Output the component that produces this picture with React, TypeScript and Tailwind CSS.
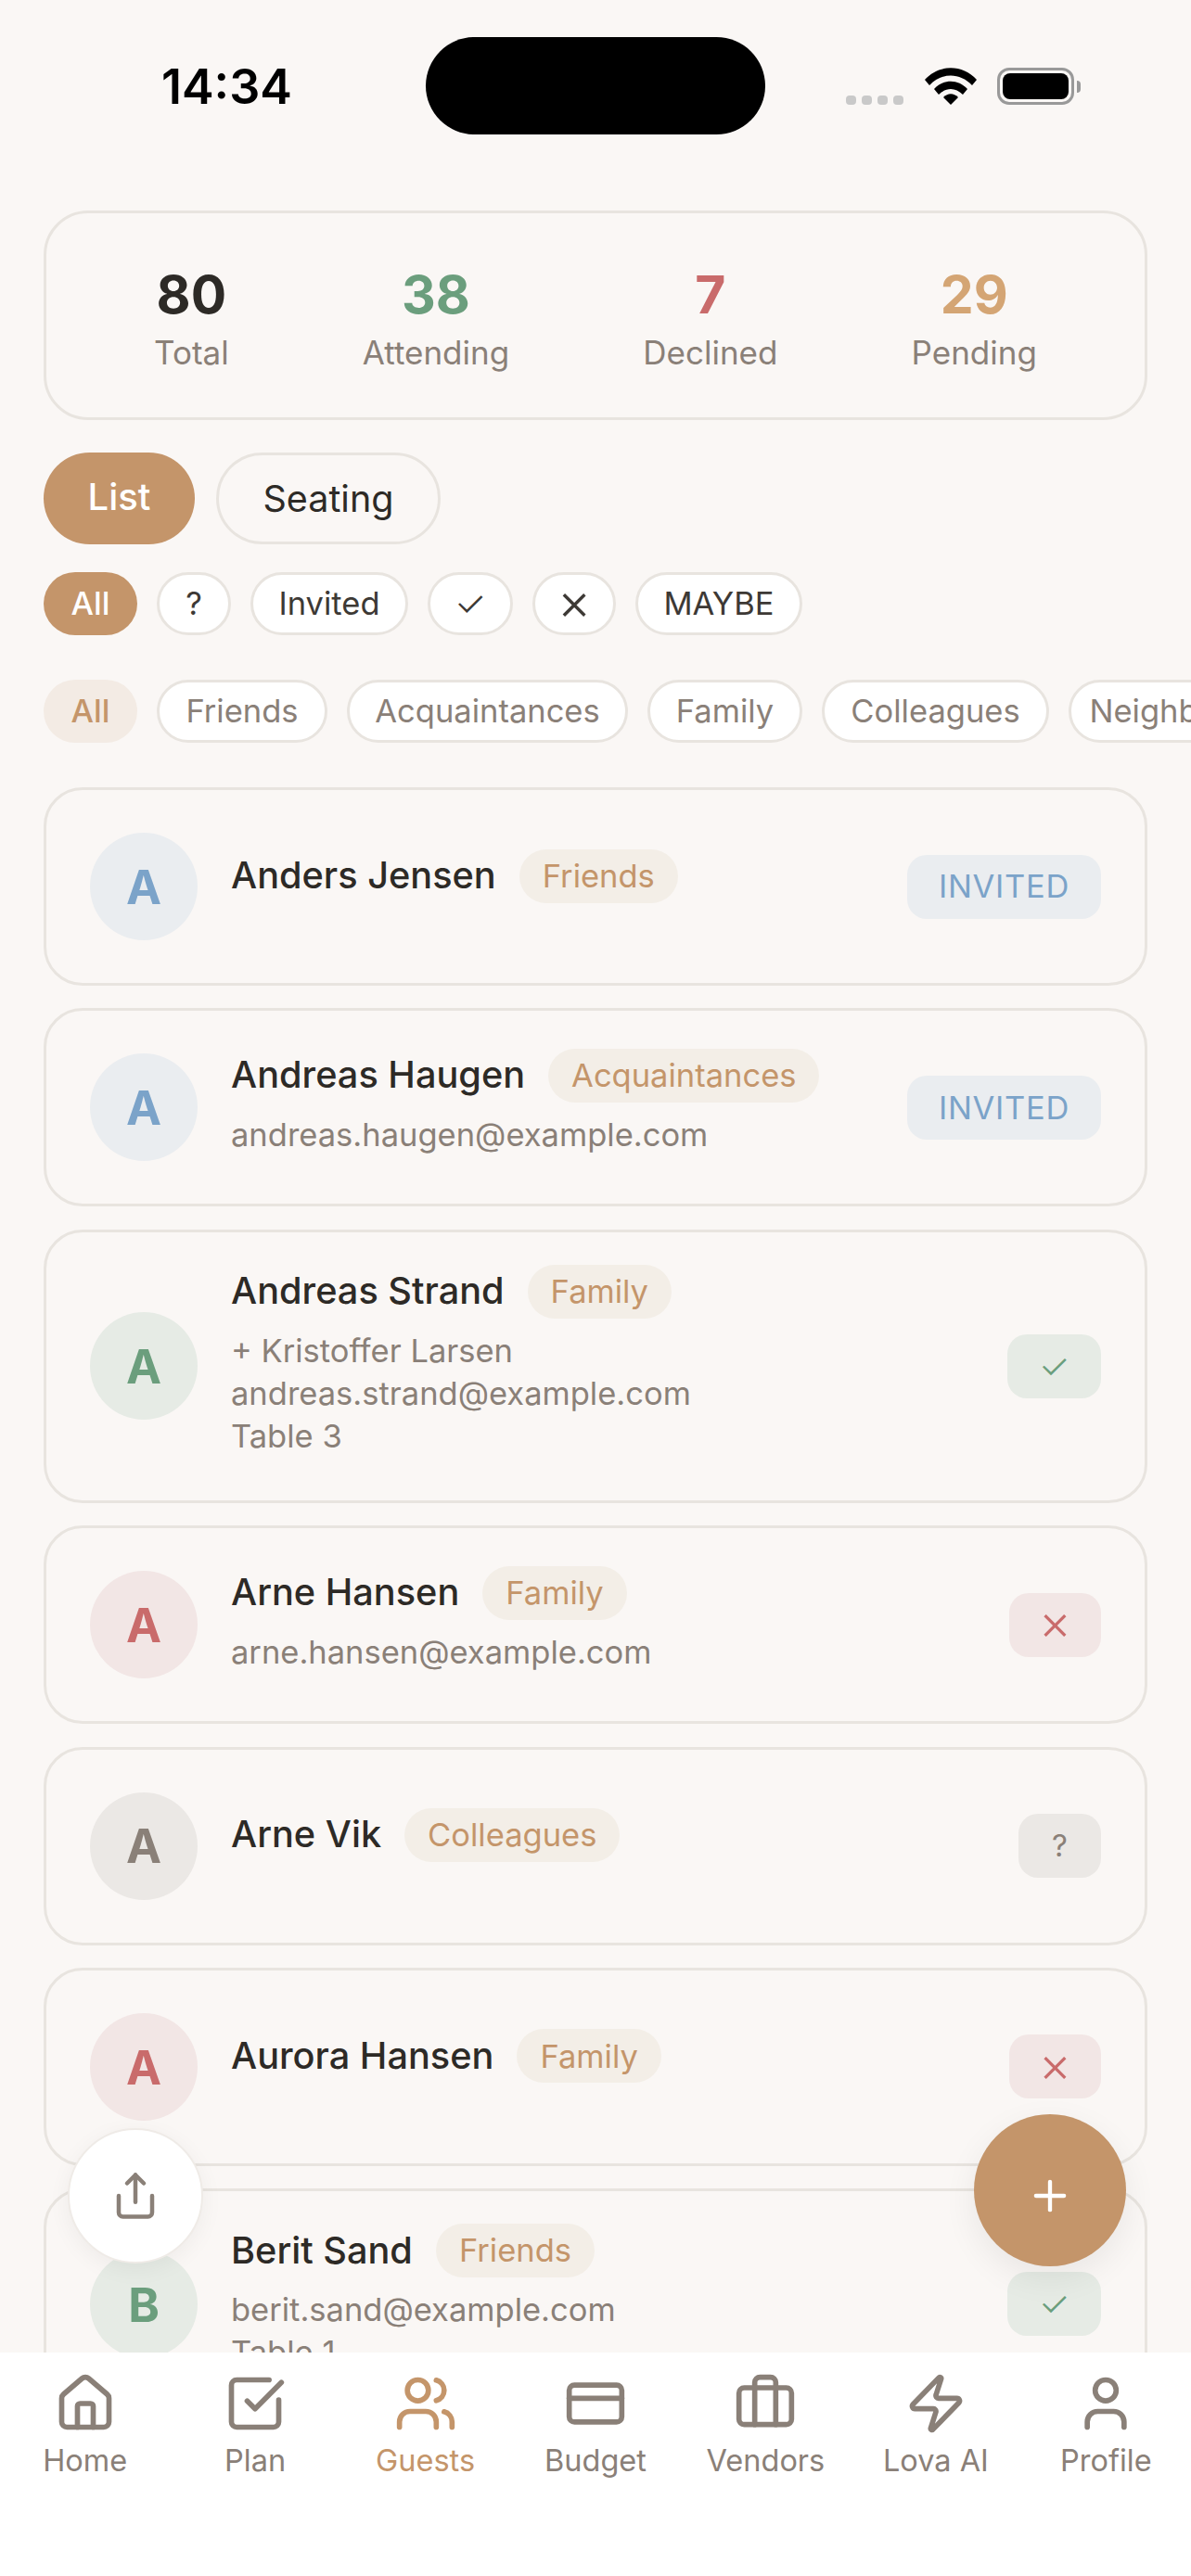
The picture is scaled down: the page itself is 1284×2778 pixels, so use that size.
import React from "react";
import { House, SquareCheckBig, Users, CreditCard, Briefcase, Zap, User, Share, Plus } from "lucide-react";

type Status = "invited" | "yes" | "no" | "unknown";
type Guest = { name: string; tag: string; status: Status; lines: string[]; initial: string };

const guests: Guest[] = [
  { name: "Anders Jensen", tag: "Friends", status: "invited", lines: [], initial: "A" },
  { name: "Andreas Haugen", tag: "Acquaintances", status: "invited", lines: ["andreas.haugen@example.com"], initial: "A" },
  { name: "Andreas Strand", tag: "Family", status: "yes", lines: ["+ Kristoffer Larsen", "andreas.strand@example.com", "Table 3"], initial: "A" },
  { name: "Arne Hansen", tag: "Family", status: "no", lines: ["arne.hansen@example.com"], initial: "A" },
  { name: "Arne Vik", tag: "Colleagues", status: "unknown", lines: [], initial: "A" },
  { name: "Aurora Hansen", tag: "Family", status: "no", lines: [], initial: "A" },
  { name: "Berit Sand", tag: "Friends", status: "yes", lines: ["berit.sand@example.com", "Table 1"], initial: "B" },
];

const avatarCls: Record<Status, string> = {
  invited: "bg-[#eaedf0] text-[#7ba3c9]",
  yes: "bg-[#e6ebe5] text-[#6b9e7d]",
  no: "bg-[#f2e6e5] text-[#c96b6b]",
  unknown: "bg-[#ebe8e5] text-[#8a8078]",
};

function StatusBadge({ status }: { status: Status }) {
  if (status === "invited")
    return <div className="h-[69px] w-[209px] rounded-[21px] bg-[#eaedf0] text-[#7ba3c9] text-[34.5px] tracking-[0.7px] flex items-center justify-center">INVITED</div>;
  if (status === "yes")
    return <div className="h-[69px] w-[101px] rounded-[21px] bg-[#e6ebe5] text-[#6b9e7d] text-[38px] font-light flex items-center justify-center">✓</div>;
  if (status === "no")
    return <div className="h-[69px] w-[99px] pb-[6px] rounded-[21px] bg-[#f2e6e5] text-[#c96b6b] text-[54px] leading-none font-light flex items-center justify-center">×</div>;
  return <div className="h-[69px] w-[89px] rounded-[21px] bg-[#ebe8e5] text-[#8a8078] text-[33px] flex items-center justify-center">?</div>;
}

function GuestCard({ g }: { g: Guest }) {
  return (
    <div className="shrink-0 min-h-[214px] rounded-[42px] border-[3px] border-[#e8e4df] pl-[47px] pr-[47px] py-[32px] flex items-center">
      <div className={`w-[116px] h-[116px] pt-[2px] rounded-full shrink-0 flex items-center justify-center text-[51px] font-bold ${avatarCls[g.status]}`}>{g.initial}</div>
      <div className="flex-1 ml-[36px] flex flex-col pb-[14px]">
        <div className="flex items-center gap-[25px] h-[60px] mt-[2px] mb-[11px]">
          <span className="text-[39.7px] font-medium text-[#2d2a26]">{g.name}</span>
          <span className="h-[58px] px-[25px] rounded-full bg-[#f3eee7] text-[#c4956a] text-[34.5px] flex items-center">{g.tag}</span>
        </div>
        {g.lines.map((l) => (
          <div key={l} className="text-[34.5px] leading-[46px] text-[#8a8078]">{l}</div>
        ))}
      </div>
      <StatusBadge status={g.status} />
    </div>
  );
}

function Stat({ n, label, cls }: { n: string; label: string; cls: string }) {
  return (
    <div className="flex flex-col items-center">
      <div className={`text-[57px] leading-[72px] font-bold ${cls}`}>{n}</div>
      <div className="text-[35px] leading-[48px] mt-[2px] text-[#8a8078]">{label}</div>
    </div>
  );
}

function Pill({ children, w }: { children: React.ReactNode; w: string }) {
  return <div className={`h-[68px] shrink-0 rounded-full bg-white border-[3px] border-[#e8e4df] text-[#3d3935] flex items-center justify-center ${w}`}>{children}</div>;
}

function Cat({ children, w }: { children: React.ReactNode; w: string }) {
  return <div className={`h-[68px] shrink-0 rounded-full bg-white border-[3px] border-[#e8e4df] text-[#8a8078] text-[34.5px] flex items-center justify-center ${w}`}>{children}</div>;
}

const nav = [
  { label: "Home", Icon: House },
  { label: "Plan", Icon: SquareCheckBig },
  { label: "Guests", Icon: Users, active: true },
  { label: "Budget", Icon: CreditCard },
  { label: "Vendors", Icon: Briefcase },
  { label: "Lova AI", Icon: Zap },
  { label: "Profile", Icon: User },
];

export default function App() {
  return (
    <div className="relative w-[1284px] h-[2778px] overflow-hidden bg-[#faf7f5] flex flex-col font-['Inter',sans-serif]">
      <div className="h-[227px] shrink-0 relative">
        <div className="absolute left-[174px] top-[62px] text-[52px] leading-[64px] font-semibold text-black">14:34</div>
        <div className="absolute left-[459px] top-[40px] w-[366px] h-[105px] rounded-full bg-black" />
        <div className="absolute left-[912px] top-[103px] flex gap-[6px]">
          {[0, 1, 2, 3].map((i) => <div key={i} className="w-[11px] h-[10px] rounded-[4px] bg-[#c9c9c9]" />)}
        </div>
        <svg className="absolute left-[997px] top-[73px]" width="56" height="40" viewBox="0 0 56 40">
          <path d="M0 13C15-4 41-4 56 13l-5 6C38 5 18 5 5 19Z" fill="#000" />
          <path d="M10 23C20 12 36 12 46 23l-5 6C33 21 23 21 15 29Z" fill="#000" />
          <path d="M20 32c5-5 11-5 16 0l-8 8Z" fill="#000" />
        </svg>
        <div className="absolute left-[1075px] top-[73px] w-[83px] h-[40px] rounded-[13px] border-[3px] border-[#999999] p-[3px]">
          <div className="w-full h-full rounded-[8px] bg-black" />
        </div>
        <div className="absolute left-[1161px] top-[87px] w-[4px] h-[13px] rounded-r-full bg-[#999999]" />
      </div>

      <div className="flex-1 min-h-0 overflow-hidden px-[47px] flex flex-col">
        <div className="shrink-0 h-[226px] rounded-[48px] border-[3px] border-[#e8e4df] px-[44px] pt-[6px] flex items-center justify-around">
          <Stat n="80" label="Total" cls="text-[#2d2a26]" />
          <Stat n="38" label="Attending" cls="text-[#6b9e7d]" />
          <Stat n="7" label="Declined" cls="text-[#c96b6b]" />
          <Stat n="29" label="Pending" cls="text-[#d4a574]" />
        </div>

        <div className="shrink-0 flex gap-[23px] mt-[35px]">
          <div className="h-[99px] w-[163px] pb-[4px] rounded-full bg-[#c4956a] text-white text-[40px] font-medium flex items-center justify-center">List</div>
          <div className="h-[99px] w-[242px] pt-[2px] rounded-full border-[3px] border-[#e8e4df] text-[#2d2a26] text-[39.5px] flex items-center justify-center">Seating</div>
        </div>

        <div className="shrink-0 flex gap-[21px] mt-[30px]">
          <div className="h-[68px] w-[101px] shrink-0 rounded-full bg-[#c4956a] text-white text-[34.5px] font-medium flex items-center justify-center">All</div>
          <Pill w="w-[80px] text-[34.5px]">?</Pill>
          <Pill w="w-[170px] text-[34.5px]">Invited</Pill>
          <Pill w="w-[92px] text-[39px] font-light">✓</Pill>
          <Pill w="w-[90px] pb-[7px] text-[56px] leading-none font-light">×</Pill>
          <Pill w="w-[180px] text-[34.5px]">MAYBE</Pill>
        </div>

        <div className="shrink-0 flex gap-[21px] mt-[48px] w-[1300px]">
          <div className="h-[68px] w-[101px] shrink-0 rounded-full bg-[#f3ebe4] text-[#c4956a] text-[34.5px] font-medium flex items-center justify-center">All</div>
          <Cat w="w-[184px]">Friends</Cat>
          <Cat w="w-[303px]">Acquaintances</Cat>
          <Cat w="w-[167px]">Family</Cat>
          <Cat w="w-[245px]">Colleagues</Cat>
          <Cat w="w-[214px]">Neighbors</Cat>
        </div>

        <div className="mt-[48px] flex flex-col gap-[24.4px]">
          {guests.map((g) => <GuestCard key={g.name} g={g} />)}
        </div>
      </div>

      <div className="h-[241px] shrink-0 bg-white grid grid-cols-7 relative z-10">
        {nav.map(({ label, Icon, active }) => (
          <div key={label} className={`flex flex-col items-center pt-[21px] ${active ? "text-[#c4956a]" : "text-[#8a8078]"}`}>
            <Icon size={68} strokeWidth={2} />
            <span className="text-[32.5px] leading-[42px] mt-[7px]">{label}</span>
          </div>
        ))}
      </div>

      <div className="absolute left-[73px] top-[2295px] w-[146px] h-[146px] rounded-full bg-white border-[2px] border-[#efebe7] shadow-[0_6px_24px_rgba(0,0,0,0.05)] flex items-center justify-center text-[#8a8078]">
        <Share size={54} strokeWidth={2} />
      </div>
      <div className="absolute left-[1050px] top-[2280px] w-[164px] h-[164px] rounded-full bg-[#c4956a] shadow-[0_12px_36px_rgba(0,0,0,0.07)] flex items-center justify-center text-white">
        <Plus size={52} strokeWidth={2} className="mt-[12px]" />
      </div>
    </div>
  );
}
